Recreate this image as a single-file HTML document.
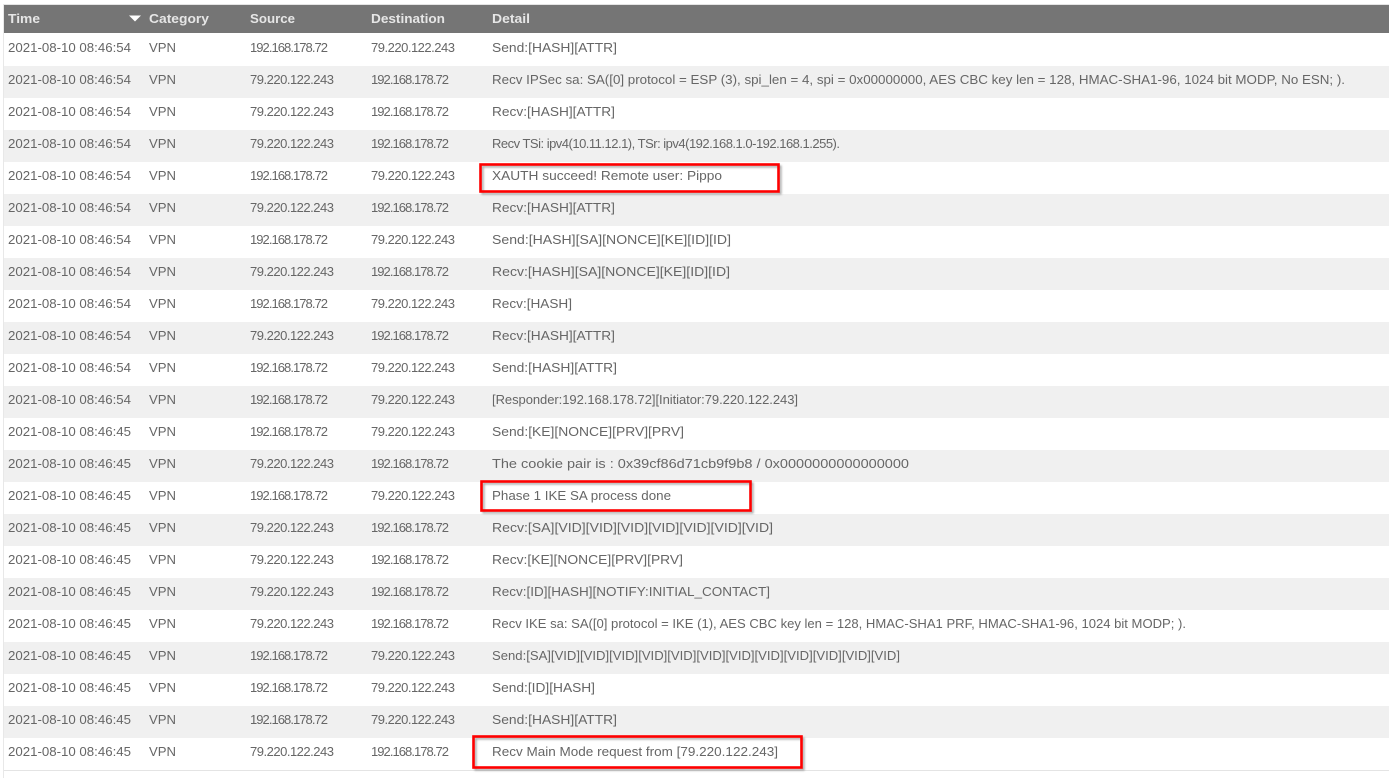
<!DOCTYPE html>
<html><head><meta charset="utf-8"><style>
html,body{margin:0;padding:0;background:#fff;width:1389px;height:778px;overflow:hidden}
svg{display:block}
text{font-family:"Liberation Sans",sans-serif;font-size:13px;fill:#666}
.h{font-weight:bold;fill:#e6e6e6}
</style></head><body>
<svg width="1389" height="778" viewBox="0 0 1389 778" xmlns="http://www.w3.org/2000/svg">
<defs><filter id="s" x="-5%" y="-20%" width="110%" height="140%"><feGaussianBlur stdDeviation="1"/></filter></defs>
<rect x="3" y="4" width="1386" height="1" fill="#e4e4e4"/>
<rect x="3" y="4" width="1" height="774" fill="#e8e8e8"/>
<rect x="4" y="5" width="1385" height="28" fill="#757575"/>
<rect x="4" y="66" width="1385" height="32" fill="#f0f0f0"/>
<rect x="4" y="130" width="1385" height="32" fill="#f0f0f0"/>
<rect x="4" y="194" width="1385" height="32" fill="#f0f0f0"/>
<rect x="4" y="258" width="1385" height="32" fill="#f0f0f0"/>
<rect x="4" y="322" width="1385" height="32" fill="#f0f0f0"/>
<rect x="4" y="386" width="1385" height="32" fill="#f0f0f0"/>
<rect x="4" y="450" width="1385" height="32" fill="#f0f0f0"/>
<rect x="4" y="514" width="1385" height="32" fill="#f0f0f0"/>
<rect x="4" y="578" width="1385" height="32" fill="#f0f0f0"/>
<rect x="4" y="642" width="1385" height="32" fill="#f0f0f0"/>
<rect x="4" y="706" width="1385" height="32" fill="#f0f0f0"/>
<rect x="4" y="770" width="1385" height="1" fill="#e4e4e4"/>

<text class="h" x="8" y="23" textLength="32" lengthAdjust="spacingAndGlyphs">Time</text>
<path d="M129 15.5h12l-6 6z" fill="#fff"/>
<text class="h" x="149" y="23" textLength="60" lengthAdjust="spacingAndGlyphs">Category</text>
<text class="h" x="250" y="23" textLength="45" lengthAdjust="spacingAndGlyphs">Source</text>
<text class="h" x="371" y="23" textLength="74" lengthAdjust="spacingAndGlyphs">Destination</text>
<text class="h" x="492" y="23" textLength="38" lengthAdjust="spacingAndGlyphs">Detail</text>

<text x="8" y="52" textLength="123" lengthAdjust="spacingAndGlyphs">2021-08-10 08:46:54</text><text x="149" y="52" textLength="27" lengthAdjust="spacingAndGlyphs">VPN</text><text x="250" y="52" textLength="78">192.168.178.72</text><text x="371" y="52" textLength="84">79.220.122.243</text><text x="492" y="52" textLength="125" lengthAdjust="spacingAndGlyphs">Send:[HASH][ATTR]</text>
<text x="8" y="84" textLength="123" lengthAdjust="spacingAndGlyphs">2021-08-10 08:46:54</text><text x="149" y="84" textLength="27" lengthAdjust="spacingAndGlyphs">VPN</text><text x="250" y="84" textLength="84">79.220.122.243</text><text x="371" y="84" textLength="78">192.168.178.72</text><text x="492" y="84" textLength="853" lengthAdjust="spacingAndGlyphs">Recv IPSec sa: SA([0] protocol = ESP (3), spi_len = 4, spi = 0x00000000, AES CBC key len = 128, HMAC-SHA1-96, 1024 bit MODP, No ESN; ).</text>
<text x="8" y="116" textLength="123" lengthAdjust="spacingAndGlyphs">2021-08-10 08:46:54</text><text x="149" y="116" textLength="27" lengthAdjust="spacingAndGlyphs">VPN</text><text x="250" y="116" textLength="84">79.220.122.243</text><text x="371" y="116" textLength="78">192.168.178.72</text><text x="492" y="116" textLength="123" lengthAdjust="spacingAndGlyphs">Recv:[HASH][ATTR]</text>
<text x="8" y="148" textLength="123" lengthAdjust="spacingAndGlyphs">2021-08-10 08:46:54</text><text x="149" y="148" textLength="27" lengthAdjust="spacingAndGlyphs">VPN</text><text x="250" y="148" textLength="84">79.220.122.243</text><text x="371" y="148" textLength="78">192.168.178.72</text><text x="492" y="148" textLength="348">Recv TSi: ipv4(10.11.12.1), TSr: ipv4(192.168.1.0-192.168.1.255).</text>
<text x="8" y="180" textLength="123" lengthAdjust="spacingAndGlyphs">2021-08-10 08:46:54</text><text x="149" y="180" textLength="27" lengthAdjust="spacingAndGlyphs">VPN</text><text x="250" y="180" textLength="78">192.168.178.72</text><text x="371" y="180" textLength="84">79.220.122.243</text><text x="492" y="180" textLength="230" lengthAdjust="spacingAndGlyphs">XAUTH succeed! Remote user: Pippo</text>
<text x="8" y="212" textLength="123" lengthAdjust="spacingAndGlyphs">2021-08-10 08:46:54</text><text x="149" y="212" textLength="27" lengthAdjust="spacingAndGlyphs">VPN</text><text x="250" y="212" textLength="84">79.220.122.243</text><text x="371" y="212" textLength="78">192.168.178.72</text><text x="492" y="212" textLength="123" lengthAdjust="spacingAndGlyphs">Recv:[HASH][ATTR]</text>
<text x="8" y="244" textLength="123" lengthAdjust="spacingAndGlyphs">2021-08-10 08:46:54</text><text x="149" y="244" textLength="27" lengthAdjust="spacingAndGlyphs">VPN</text><text x="250" y="244" textLength="78">192.168.178.72</text><text x="371" y="244" textLength="84">79.220.122.243</text><text x="492" y="244" textLength="239" lengthAdjust="spacingAndGlyphs">Send:[HASH][SA][NONCE][KE][ID][ID]</text>
<text x="8" y="276" textLength="123" lengthAdjust="spacingAndGlyphs">2021-08-10 08:46:54</text><text x="149" y="276" textLength="27" lengthAdjust="spacingAndGlyphs">VPN</text><text x="250" y="276" textLength="84">79.220.122.243</text><text x="371" y="276" textLength="78">192.168.178.72</text><text x="492" y="276" textLength="238" lengthAdjust="spacingAndGlyphs">Recv:[HASH][SA][NONCE][KE][ID][ID]</text>
<text x="8" y="308" textLength="123" lengthAdjust="spacingAndGlyphs">2021-08-10 08:46:54</text><text x="149" y="308" textLength="27" lengthAdjust="spacingAndGlyphs">VPN</text><text x="250" y="308" textLength="78">192.168.178.72</text><text x="371" y="308" textLength="84">79.220.122.243</text><text x="492" y="308" textLength="80" lengthAdjust="spacingAndGlyphs">Recv:[HASH]</text>
<text x="8" y="340" textLength="123" lengthAdjust="spacingAndGlyphs">2021-08-10 08:46:54</text><text x="149" y="340" textLength="27" lengthAdjust="spacingAndGlyphs">VPN</text><text x="250" y="340" textLength="84">79.220.122.243</text><text x="371" y="340" textLength="78">192.168.178.72</text><text x="492" y="340" textLength="123" lengthAdjust="spacingAndGlyphs">Recv:[HASH][ATTR]</text>
<text x="8" y="372" textLength="123" lengthAdjust="spacingAndGlyphs">2021-08-10 08:46:54</text><text x="149" y="372" textLength="27" lengthAdjust="spacingAndGlyphs">VPN</text><text x="250" y="372" textLength="78">192.168.178.72</text><text x="371" y="372" textLength="84">79.220.122.243</text><text x="492" y="372" textLength="125" lengthAdjust="spacingAndGlyphs">Send:[HASH][ATTR]</text>
<text x="8" y="404" textLength="123" lengthAdjust="spacingAndGlyphs">2021-08-10 08:46:54</text><text x="149" y="404" textLength="27" lengthAdjust="spacingAndGlyphs">VPN</text><text x="250" y="404" textLength="78">192.168.178.72</text><text x="371" y="404" textLength="84">79.220.122.243</text><text x="492" y="404" textLength="306">[Responder:192.168.178.72][Initiator:79.220.122.243]</text>
<text x="8" y="436" textLength="123" lengthAdjust="spacingAndGlyphs">2021-08-10 08:46:45</text><text x="149" y="436" textLength="27" lengthAdjust="spacingAndGlyphs">VPN</text><text x="250" y="436" textLength="78">192.168.178.72</text><text x="371" y="436" textLength="84">79.220.122.243</text><text x="492" y="436" textLength="192" lengthAdjust="spacingAndGlyphs">Send:[KE][NONCE][PRV][PRV]</text>
<text x="8" y="468" textLength="123" lengthAdjust="spacingAndGlyphs">2021-08-10 08:46:45</text><text x="149" y="468" textLength="27" lengthAdjust="spacingAndGlyphs">VPN</text><text x="250" y="468" textLength="84">79.220.122.243</text><text x="371" y="468" textLength="78">192.168.178.72</text><text x="492" y="468" textLength="417" lengthAdjust="spacingAndGlyphs">The cookie pair is : 0x39cf86d71cb9f9b8 / 0x0000000000000000</text>
<text x="8" y="500" textLength="123" lengthAdjust="spacingAndGlyphs">2021-08-10 08:46:45</text><text x="149" y="500" textLength="27" lengthAdjust="spacingAndGlyphs">VPN</text><text x="250" y="500" textLength="78">192.168.178.72</text><text x="371" y="500" textLength="84">79.220.122.243</text><text x="492" y="500" textLength="179" lengthAdjust="spacingAndGlyphs">Phase 1 IKE SA process done</text>
<text x="8" y="532" textLength="123" lengthAdjust="spacingAndGlyphs">2021-08-10 08:46:45</text><text x="149" y="532" textLength="27" lengthAdjust="spacingAndGlyphs">VPN</text><text x="250" y="532" textLength="84">79.220.122.243</text><text x="371" y="532" textLength="78">192.168.178.72</text><text x="492" y="532" textLength="281" lengthAdjust="spacingAndGlyphs">Recv:[SA][VID][VID][VID][VID][VID][VID][VID]</text>
<text x="8" y="564" textLength="123" lengthAdjust="spacingAndGlyphs">2021-08-10 08:46:45</text><text x="149" y="564" textLength="27" lengthAdjust="spacingAndGlyphs">VPN</text><text x="250" y="564" textLength="84">79.220.122.243</text><text x="371" y="564" textLength="78">192.168.178.72</text><text x="492" y="564" textLength="191" lengthAdjust="spacingAndGlyphs">Recv:[KE][NONCE][PRV][PRV]</text>
<text x="8" y="596" textLength="123" lengthAdjust="spacingAndGlyphs">2021-08-10 08:46:45</text><text x="149" y="596" textLength="27" lengthAdjust="spacingAndGlyphs">VPN</text><text x="250" y="596" textLength="84">79.220.122.243</text><text x="371" y="596" textLength="78">192.168.178.72</text><text x="492" y="596" textLength="278" lengthAdjust="spacingAndGlyphs">Recv:[ID][HASH][NOTIFY:INITIAL_CONTACT]</text>
<text x="8" y="628" textLength="123" lengthAdjust="spacingAndGlyphs">2021-08-10 08:46:45</text><text x="149" y="628" textLength="27" lengthAdjust="spacingAndGlyphs">VPN</text><text x="250" y="628" textLength="84">79.220.122.243</text><text x="371" y="628" textLength="78">192.168.178.72</text><text x="492" y="628" textLength="694" lengthAdjust="spacingAndGlyphs">Recv IKE sa: SA([0] protocol = IKE (1), AES CBC key len = 128, HMAC-SHA1 PRF, HMAC-SHA1-96, 1024 bit MODP; ).</text>
<text x="8" y="660" textLength="123" lengthAdjust="spacingAndGlyphs">2021-08-10 08:46:45</text><text x="149" y="660" textLength="27" lengthAdjust="spacingAndGlyphs">VPN</text><text x="250" y="660" textLength="78">192.168.178.72</text><text x="371" y="660" textLength="84">79.220.122.243</text><text x="492" y="660" textLength="408" lengthAdjust="spacingAndGlyphs">Send:[SA][VID][VID][VID][VID][VID][VID][VID][VID][VID][VID][VID][VID]</text>
<text x="8" y="692" textLength="123" lengthAdjust="spacingAndGlyphs">2021-08-10 08:46:45</text><text x="149" y="692" textLength="27" lengthAdjust="spacingAndGlyphs">VPN</text><text x="250" y="692" textLength="78">192.168.178.72</text><text x="371" y="692" textLength="84">79.220.122.243</text><text x="492" y="692" textLength="103" lengthAdjust="spacingAndGlyphs">Send:[ID][HASH]</text>
<text x="8" y="724" textLength="123" lengthAdjust="spacingAndGlyphs">2021-08-10 08:46:45</text><text x="149" y="724" textLength="27" lengthAdjust="spacingAndGlyphs">VPN</text><text x="250" y="724" textLength="78">192.168.178.72</text><text x="371" y="724" textLength="84">79.220.122.243</text><text x="492" y="724" textLength="125" lengthAdjust="spacingAndGlyphs">Send:[HASH][ATTR]</text>
<text x="8" y="756" textLength="123" lengthAdjust="spacingAndGlyphs">2021-08-10 08:46:45</text><text x="149" y="756" textLength="27" lengthAdjust="spacingAndGlyphs">VPN</text><text x="250" y="756" textLength="84">79.220.122.243</text><text x="371" y="756" textLength="78">192.168.178.72</text><text x="492" y="756" textLength="286" lengthAdjust="spacingAndGlyphs">Recv Main Mode request from [79.220.122.243]</text>

<g fill="none" stroke="#555" stroke-width="2" opacity=".55" filter="url(#s)">
<rect x="482.5" y="166.5" width="298" height="27"/>
<rect x="483.5" y="483.5" width="269" height="29"/>
<rect x="475.5" y="738.5" width="328" height="31"/>
</g>
<g fill="none" stroke="#f00" stroke-width="2.6">
<rect x="480.5" y="164.5" width="298" height="27"/>
<rect x="481.5" y="481.5" width="269" height="29"/>
<rect x="473.5" y="736.5" width="328" height="31"/>
</g>
</svg>
</body></html>
